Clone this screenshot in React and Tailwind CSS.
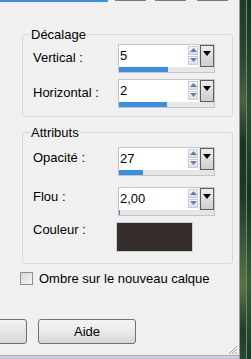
import React from 'react';

const SpinField = ({ value, fill }) => (
    <div className="w-[97px] h-[29px] border border-[#c4c4c4] flex flex-col bg-[#f4f4f4]">
        <div className="h-[22px] flex">
            <div className="flex-1 bg-white flex items-center border-r border-[#e0e0e0]">
                <span className="pl-[1px] text-[13px] leading-[15px] text-black">{value}</span>
                <div className="ml-auto w-[10px] h-[20px] flex flex-col gap-[1px] mr-[1px]">
                    <div className="h-[9px] bg-gradient-to-b from-[#f4f6fb] to-[#d9dfec] border border-[#c5ccda] flex items-center justify-center">
                        <svg width="7" height="4" viewBox="0 0 7 4"><polygon points="3.5,0 7,4 0,4" fill="#6b7ba3" /></svg>
                    </div>
                    <div className="h-[9px] bg-gradient-to-b from-[#f4f6fb] to-[#d9dfec] border border-[#c5ccda] flex items-center justify-center">
                        <svg width="7" height="4" viewBox="0 0 7 4"><polygon points="0,0 7,0 3.5,4" fill="#6b7ba3" /></svg>
                    </div>
                </div>
            </div>
            <div className="w-[14px] border border-[#5e5e5e] bg-gradient-to-b from-[#ececec] to-[#cfcfcf] flex justify-center pt-[5px]">
                <svg width="8" height="5" viewBox="0 0 8 5"><polygon points="0,0 8,0 4,5" fill="#000" /></svg>
            </div>
        </div>
        <div className="h-[5px] bg-[#e6e6e6] flex">
            <div className="h-full bg-[#3a8ee4]" style={{ width: fill }} />
        </div>
    </div>
);

const Row = ({ label, pt, children, className = '' }) => (
    <div className={`flex ${className}`}>
        <div className={`w-[85px] ${pt} leading-[15px]`}>{label}</div>
        {children}
    </div>
);

const Groupe = ({ titre, className, children }) => (
    <div className={`ml-[22px] w-[211px] border border-[#d5d9dc] rounded-[3px] flex flex-col pl-[10px] ${className}`}>
        <span className="-mt-[8px] -ml-[3px] self-start px-[1px] bg-[#f0f0f0] leading-[15px]">{titre}</span>
        {children}
    </div>
);

const App = () => {
    return (
        <div className="w-[251px] h-[359px] flex overflow-hidden text-[13px] text-black font-['Liberation_Sans',Arial,sans-serif]">
            <div className="w-[239px] flex flex-col bg-[#f0f0f0]">
                {/* bas des onglets */}
                <div className="h-[2px] flex">
                    <div className="w-[108px] bg-[#3b8fe2]" />
                    <div className="ml-[7px] w-[31px] h-[1px] bg-[#7a7a7a]" />
                    <div className="ml-[9px] w-[31px] h-[1px] bg-[#7a7a7a]" />
                    <div className="ml-[11px] w-[31px] h-[1px] bg-[#7a7a7a]" />
                </div>

                <Groupe titre="Décalage" className="mt-[32px] pb-[8px]">
                    <Row label="Vertical :" pt="pt-[6px]" className="mt-[2px]">
                        <SpinField value="5" fill="49px" />
                    </Row>
                    <Row label="Horizontal :" pt="pt-[6px]" className="mt-[6px]">
                        <SpinField value="2" fill="48px" />
                    </Row>
                </Groupe>

                <Groupe titre="Attributs" className="mt-[15px] pb-[11px]">
                    <Row label="Opacité :" pt="pt-[3px]" className="mt-[7px]">
                        <SpinField value="27" fill="24px" />
                    </Row>
                    <Row label="Flou :" pt="pt-[2px]" className="mt-[11px]">
                        <SpinField value="2,00" fill="1px" />
                    </Row>
                    <Row label="Couleur :" pt="pt-0" className="mt-[6px]">
                        <div className="-ml-[2px] w-[77px] h-[30px] bg-[#352d2b] border border-[#cfcfcf]" />
                    </Row>
                </Groupe>

                <div className="mt-[7px] ml-[20px] flex items-center gap-[6px]">
                    <div className="w-[13px] h-[13px] border border-[#8f8f8f] bg-gradient-to-br from-[#d6d6d6] to-[#f6f6f6]" />
                    <span className="leading-[15px]">Ombre sur le nouveau calque</span>
                </div>

                <div className="mt-[33px] flex">
                    <div className="-ml-[33px] w-[60px] h-[25px] border border-[#707070] rounded-[3px] bg-gradient-to-b from-[#f2f2f2] to-[#d9d9d9]" />
                    <div className="ml-[11px] w-[98px] h-[25px] border border-[#707070] rounded-[3px] bg-gradient-to-b from-[#f4f4f4] via-[#ebebeb] to-[#d6d6d6] flex items-center justify-center leading-[15px]">
                        Aide
                    </div>
                </div>

                <div className="flex-1 flex items-end justify-end pr-[1px]">
                    <svg width="11" height="11" viewBox="0 0 11 11">
                        <line x1="10" y1="2" x2="2" y2="10" stroke="#a0a0a0" />
                        <line x1="10" y1="5" x2="5" y2="10" stroke="#a0a0a0" />
                        <line x1="10" y1="8" x2="8" y2="10" stroke="#a0a0a0" />
                    </svg>
                </div>
                <div className="h-[1px] bg-[#a9a9a9]" />
                <div className="h-[4px] bg-gradient-to-b from-[#d4d6e4] to-[#bfc3d8]" />
            </div>

            {/* bord de la fenêtre */}
            <div className="w-[1px] bg-[#9a9a9a]" />
            <div className="w-[6px] bg-[linear-gradient(180deg,#1f3b2c_0%,#27472f_15%,#4a6340_28%,#1a3424_40%,#1c3a28_55%,#3a5c3a_68%,#5a7342_80%,#1e3d2b_92%,#2a4a32_100%)]" />
            <div className="w-[1px] bg-[#6e8a66]" />
            <div className="w-[4px] bg-[linear-gradient(180deg,#183224_0%,#2d4d34_30%,#173020_55%,#3c5c3a_78%,#1c3828_100%)]" />
        </div>
    );
};

export default App;
